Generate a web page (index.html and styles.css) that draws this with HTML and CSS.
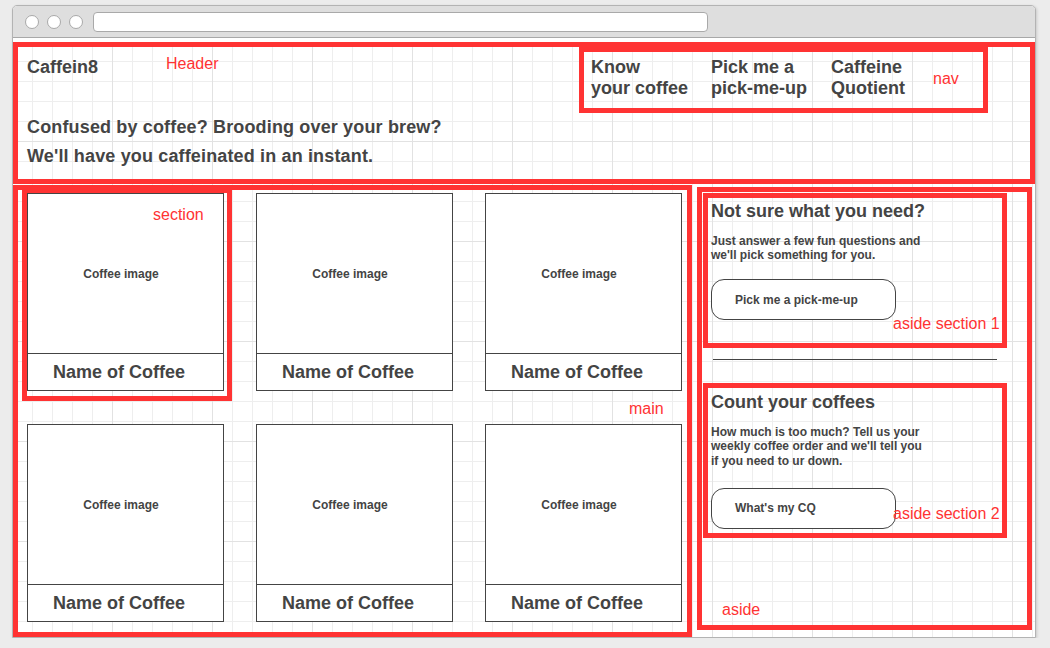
FILE: index.html
```html
<!DOCTYPE html>
<html lang="en">
<head>
  <meta charset="UTF-8" />
  <title>Caffein8 wireframe</title>
  <link rel="stylesheet" href="styles.css">
</head>
<body>
  <div class="window">
    <div class="titlebar">
      <span class="dot"></span>
      <span class="dot"></span>
      <span class="dot"></span>
      <div class="address"></div>
    </div>

    <div class="page">
      <header class="site-header">
        <span class="note note-header">Header</span>
        <div class="top-row">
          <div class="logo">Caffein8</div>
          <nav class="nav">
            <a href="#">Know<br>your coffee</a>
            <a href="#">Pick me a<br>pick-me-up</a>
            <a href="#">Caffeine<br>Quotient</a>
            <span class="note note-nav">nav</span>
          </nav>
        </div>
        <p class="tagline">Confused by coffee? Brooding over your brew?</p>
        <p class="tagline">We'll have you caffeinated in an instant.</p>
      </header>

      <div class="content">
        <main class="coffees">
          <section class="coffee marked">
            <div class="coffee-img">Coffee image</div>
            <div class="coffee-name">Name of Coffee</div>
            <span class="note note-section">section</span>
          </section>
          <section class="coffee">
            <div class="coffee-img">Coffee image</div>
            <div class="coffee-name">Name of Coffee</div>
          </section>
          <section class="coffee">
            <div class="coffee-img">Coffee image</div>
            <div class="coffee-name">Name of Coffee</div>
          </section>
          <section class="coffee">
            <div class="coffee-img">Coffee image</div>
            <div class="coffee-name">Name of Coffee</div>
          </section>
          <section class="coffee">
            <div class="coffee-img">Coffee image</div>
            <div class="coffee-name">Name of Coffee</div>
          </section>
          <section class="coffee">
            <div class="coffee-img">Coffee image</div>
            <div class="coffee-name">Name of Coffee</div>
          </section>
          <span class="note note-main">main</span>
        </main>

        <aside class="sidebar">
          <section class="side-box">
            <h2>Not sure what you need?</h2>
            <p>Just answer a few fun questions and we'll pick something for you.</p>
            <button>Pick me a pick-me-up</button>
            <span class="note note-side">aside section 1</span>
          </section>
          <hr class="rule">
          <section class="side-box second">
            <h2>Count your coffees</h2>
            <p>How much is too much? Tell us your weekly coffee order and we'll tell you if you need to ur down.</p>
            <button>What's my CQ</button>
            <span class="note note-side">aside section 2</span>
          </section>
          <span class="note note-aside">aside</span>
        </aside>
      </div>
    </div>
  </div>
</body>
</html>
```

FILE: styles.css
```css
* {
  margin: 0;
  padding: 0;
  box-sizing: border-box;
}
body {
  background: #ececec;
  font-family: "Liberation Sans", Arial, sans-serif;
  color: #444;
}
.window {
  width: 1024px;
  height: 633px;
  margin: 5px 0 0 12px;
  border: 1px solid #b3b3b3;
  border-radius: 5px 5px 0 0;
  background: #fff;
  box-shadow: 1px 1px 3px rgba(0,0,0,0.15);
  overflow: hidden;
}
.titlebar {
  height: 32px;
  background: #dedede;
  border-bottom: 1px solid #a8a8a8;
  display: flex;
  align-items: center;
  gap: 8px;
  padding-left: 12px;
}
.dot {
  width: 14px;
  height: 14px;
  border-radius: 50%;
  background: #fff;
  border: 1px solid #a9a9a9;
}
.address {
  width: 615px;
  height: 20px;
  margin-left: 2px;
  background: #fff;
  border: 1px solid #a9a9a9;
  border-radius: 4px;
}
.page {
  height: 599px;
  background-color: #fff;
  background-image:
    linear-gradient(#e2e2e2 1px, transparent 1px),
    linear-gradient(90deg, #e2e2e2 1px, transparent 1px),
    linear-gradient(#eeeeee 1px, transparent 1px),
    linear-gradient(90deg, #eeeeee 1px, transparent 1px);
  background-size: 100px 100px, 100px 100px, 20px 20px, 20px 20px;
  background-position: -1px -1px;
}
.note {
  position: absolute;
  color: #ff3333;
  font-size: 16px;
  font-weight: normal;
  line-height: normal;
  white-space: nowrap;
}

/* header */
.site-header {
  position: relative;
  height: 142px;
  margin-top: 4px;
  border: 5px solid #ff3333;
  padding-left: 9px;
}
.top-row {
  display: flex;
  align-items: flex-start;
}
.logo {
  padding-top: 10px;
  font-size: 18px;
  line-height: 21px;
  font-weight: bold;
}
.nav {
  position: relative;
  display: flex;
  width: 409px;
  height: 66px;
  margin-left: auto;
  margin-right: 42px;
  border: 5px solid #ff3333;
  padding: 5px 0 0 7px;
}
.nav a {
  width: 120px;
  font-size: 18px;
  line-height: 21px;
  font-weight: bold;
  color: #444;
  text-decoration: none;
}
.tagline {
  font-size: 18px;
  line-height: 29px;
  font-weight: bold;
  letter-spacing: 0.15px;
}
.note-header { top: 8px; left: 148px; }
.note-nav { top: 18px; left: 349px; }

/* main + aside */
.content {
  display: flex;
  height: 452px;
  margin-top: 1px;
}
.coffees {
  position: relative;
  width: 679px;
  border: 5px solid #ff3333;
  padding: 3px 0 0 9px;
  display: grid;
  grid-template-columns: repeat(3, 197px);
  grid-auto-rows: 198px;
  column-gap: 32px;
  row-gap: 33px;
  align-content: start;
}
.coffee {
  position: relative;
  display: flex;
  flex-direction: column;
  background: #fff;
  border: 1px solid #444;
}
.coffee.marked::after {
  content: "";
  position: absolute;
  top: -6px;
  left: -6px;
  right: -9px;
  bottom: -11px;
  border: 5px solid #ff3333;
}
.coffee-img {
  height: 160px;
  flex-shrink: 0;
  border-bottom: 1px solid #444;
  display: flex;
  align-items: center;
  justify-content: center;
  padding-right: 9px;
  font-size: 12px;
  font-weight: bold;
}
.coffee-name {
  height: 36px;
  line-height: 37px;
  text-align: center;
  padding-right: 13px;
  font-size: 18px;
  font-weight: bold;
}
.note-main { top: 210px; left: 611px; }
.note-section { top: 12px; left: 125px; }

.sidebar {
  position: relative;
  width: 335px;
  height: 443px;
  margin: 2px 0 0 5px;
  border: 5px solid #ff3333;
  padding: 1px 0 0 1px;
}
.side-box {
  position: relative;
  width: 304px;
  height: 155px;
  border: 5px solid #ff3333;
  padding: 3px 0 0 3px;
}
.side-box h2 {
  font-size: 18px;
  font-weight: bold;
  line-height: normal;
  margin-bottom: 12px;
}
.side-box p {
  width: 220px;
  font-size: 12px;
  font-weight: bold;
}
.side-box button {
  display: block;
  width: 185px;
  height: 41px;
  margin-top: 17px;
  padding-left: 23px;
  text-align: left;
  background: #fff;
  border: 1px solid #444;
  border-radius: 13px;
  font-family: "Liberation Sans", Arial, sans-serif;
  font-size: 12px;
  font-weight: bold;
  color: #444;
}
.side-box.second h2 {
  margin-top: 1px;
}
.side-box.second p {
  line-height: 14.3px;
}
.side-box.second button {
  margin-top: 20px;
}
.rule {
  width: 284px;
  border: none;
  border-top: 1px solid #444;
  margin: 11px 0 23px 10px;
}
.note-side { top: 117px; left: 185px; }
.note-aside { top: 409px; left: 20px; }
```
